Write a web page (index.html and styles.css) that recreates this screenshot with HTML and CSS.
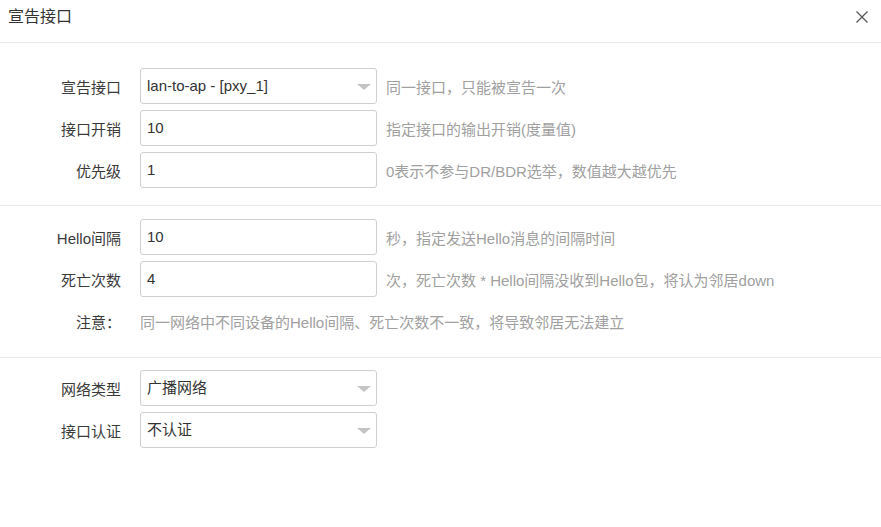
FILE: index.html
```html
<!DOCTYPE html>
<html lang="zh-CN">
<head>
<meta charset="utf-8">
<title>宣告接口</title>
<link rel="stylesheet" href="styles.css">
</head>
<body>
<div class="dialog">
  <div class="dialog-header">
    <span class="dialog-title">宣告接口</span>
    <span class="dialog-close" aria-label="关闭">
      <svg width="12" height="12" viewBox="0 0 12 12"><path d="M0.5 0.5L11.5 11.5M11.5 0.5L0.5 11.5" stroke="#555" stroke-width="1.2" fill="none"/></svg>
    </span>
  </div>

  <div class="section section-first">
    <div class="row">
      <label class="row-label">宣告接口</label>
      <div class="field select">lan-to-ap - [pxy_1]<span class="caret"></span></div>
      <span class="hint">同一接口，只能被宣告一次</span>
    </div>
    <div class="row">
      <label class="row-label">接口开销</label>
      <div class="field">10</div>
      <span class="hint">指定接口的输出开销(度量值)</span>
    </div>
    <div class="row">
      <label class="row-label">优先级</label>
      <div class="field">1</div>
      <span class="hint">0表示不参与DR/BDR选举，数值越大越优先</span>
    </div>
  </div>

  <div class="section">
    <div class="row">
      <label class="row-label">Hello间隔</label>
      <div class="field">10</div>
      <span class="hint">秒，指定发送Hello消息的间隔时间</span>
    </div>
    <div class="row">
      <label class="row-label">死亡次数</label>
      <div class="field">4</div>
      <span class="hint">次，死亡次数 * Hello间隔没收到Hello包，将认为邻居down</span>
    </div>
    <div class="row row-note">
      <label class="row-label">注意：</label>
      <span class="note">同一网络中不同设备的Hello间隔、死亡次数不一致，将导致邻居无法建立</span>
    </div>
  </div>

  <div class="section section-last">
    <div class="row">
      <label class="row-label">网络类型</label>
      <div class="field select">广播网络<span class="caret"></span></div>
    </div>
    <div class="row">
      <label class="row-label">接口认证</label>
      <div class="field select">不认证<span class="caret"></span></div>
    </div>
  </div>
</div>
</body>
</html>
```

FILE: styles.css
```css
html, body {
  margin: 0;
  padding: 0;
  background: #fff;
}

body {
  font-family: "Liberation Sans", "Noto Sans CJK SC", sans-serif;
  font-size: 15px;
  color: #333;
  width: 881px;
}

.dialog-header {
  height: 43px;
  box-sizing: border-box;
  border-bottom: 1px solid #ebebeb;
  display: flex;
  justify-content: space-between;
  align-items: flex-start;
  padding: 7px 13px 0 8px;
}

.dialog-title {
  font-size: 16px;
  line-height: 20px;
  color: #333;
}

.dialog-close {
  display: flex;
  margin-top: 4px;
}

.section {
  border-bottom: 1px solid #ebebeb;
  padding: 13px 0 11px;
}

.section-first {
  padding-top: 25px;
}

.section-last {
  border-bottom: none;
  padding-top: 12px;
}

.row {
  display: flex;
  align-items: center;
  height: 36px;
  margin-bottom: 6px;
}

.row-label {
  width: 121px;
  text-align: right;
  margin-right: 19px;
  flex: none;
  color: #3a3a3a;
}

.field {
  position: relative;
  box-sizing: border-box;
  width: 237px;
  height: 36px;
  border: 1px solid #cfcfcf;
  border-radius: 3px;
  padding: 0 6px;
  line-height: 34px;
  color: #333;
  flex: none;
  white-space: nowrap;
}

.caret {
  position: absolute;
  right: 5px;
  top: 15px;
  width: 0;
  height: 0;
  border-left: 7px solid transparent;
  border-right: 7px solid transparent;
  border-top: 6px solid #c4c4c4;
}

.hint {
  margin-left: 9px;
  color: #a0a0a0;
  white-space: nowrap;
}

.row-note {
  height: 37px;
}

.note {
  color: #a0a0a0;
  white-space: nowrap;
}
```
